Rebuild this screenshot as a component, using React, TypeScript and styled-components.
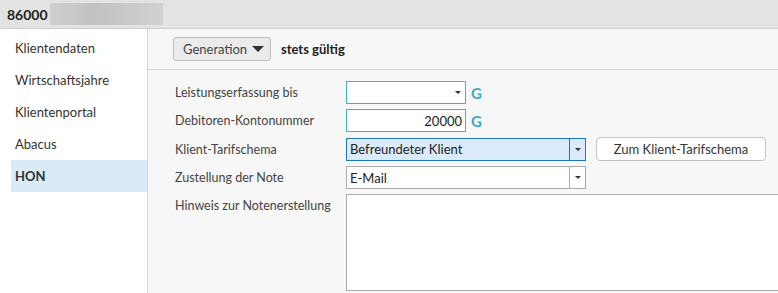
import React from "react";
import styled, { createGlobalStyle } from "styled-components";

const Global = createGlobalStyle`
  html, body {
    margin: 0;
    padding: 0;
    background: #f7f7f7;
  }
  body {
    font-family: Lato, "Noto Sans", sans-serif;
    font-size: 12.5px;
    color: #333;
  }
`;

const Page = styled.div`
  width: 778px;
  height: 293px;
  display: flex;
  flex-direction: column;
  overflow: hidden;
`;

const Header = styled.div`
  height: 28px;
  flex-shrink: 0;
  background: #e3e3e3;
  border-bottom: 1px solid #cdcdcd;
  display: flex;
  align-items: center;
  padding-left: 7px;
  gap: 2px;
`;

const ClientNo = styled.span`
  font-weight: 700;
  font-size: 14px;
  color: #222;
`;

const Redacted = styled.div`
  width: 113px;
  height: 22px;
  background: linear-gradient(90deg, #cfcfcf, #c2c2c2 40%, #c9c9c9 70%, #d2d2d2);
`;

const Body = styled.div`
  flex: 1;
  display: flex;
  min-height: 0;
`;

const Sidebar = styled.nav`
  width: 148px;
  flex-shrink: 0;
  background: #fff;
  border-right: 1px solid #d6d6d6;
  padding: 3px 0 0 11px;
  box-sizing: border-box;
`;

const NavItem = styled.div<{ $active?: boolean }>`
  height: 32px;
  display: flex;
  align-items: center;
  padding-left: 4px;
  font-size: 13px;
  color: #333;
  font-weight: ${(p) => (p.$active ? 700 : 400)};
  background: ${(p) => (p.$active ? "#d9ebf7" : "transparent")};
`;

const Main = styled.main`
  flex: 1;
  background: #f7f7f7;
  overflow: hidden;
`;

const Toolbar = styled.div`
  height: 40px;
  border-bottom: 1px solid #d3d3d3;
  display: flex;
  align-items: center;
  padding-left: 25px;
  gap: 10px;
`;

const DropButton = styled.button`
  height: 24px;
  width: 98px;
  padding: 0 6px 0 9px;
  display: flex;
  align-items: center;
  justify-content: space-between;
  background: #ebebeb;
  border: 1px solid #bdbdbd;
  border-radius: 3px;
  font: inherit;
  font-size: 13px;
  color: #444;
`;

const Caret = styled.span<{ $size?: number }>`
  width: 0;
  height: 0;
  border-left: ${(p) => p.$size ?? 6}px solid transparent;
  border-right: ${(p) => p.$size ?? 6}px solid transparent;
  border-top: ${(p) => p.$size ?? 6}px solid #333;
`;

const Validity = styled.span`
  font-weight: 700;
  font-size: 13px;
  color: #222;
`;

const Form = styled.div`
  padding: 11px 0 0 27px;
  display: flex;
  flex-direction: column;
  gap: 5px;
`;

const Row = styled.div<{ $top?: boolean }>`
  display: flex;
  align-items: ${(p) => (p.$top ? "flex-start" : "center")};
`;

const Label = styled.label<{ $top?: boolean }>`
  width: 171px;
  flex-shrink: 0;
  color: #444;
  padding-top: ${(p) => (p.$top ? "4px" : "0")};
`;

const Field = styled.div<{ $width: number; $accent?: "teal" | "blue"; $fill?: string }>`
  width: ${(p) => p.$width}px;
  height: 23px;
  box-sizing: border-box;
  display: flex;
  align-items: center;
  border: 1px solid
    ${(p) => (p.$accent === "teal" ? "#3cb5c6" : p.$accent === "blue" ? "#1b76c0" : "#ababab")};
  background: ${(p) => p.$fill ?? "#fff"};
  color: #222;
  font-size: 13px;
`;

const FieldText = styled.span<{ $right?: boolean }>`
  flex: 1;
  padding: 0 3px;
  text-align: ${(p) => (p.$right ? "right" : "left")};
  white-space: nowrap;
`;

const DropZone = styled.span<{ $divider?: string }>`
  width: 15px;
  height: 100%;
  display: flex;
  align-items: center;
  justify-content: center;
  border-left: ${(p) => (p.$divider ? `1px solid ${p.$divider}` : "none")};
`;

const GMark = styled.span`
  margin-left: 5px;
  color: #3aaac8;
  font-weight: 700;
  font-size: 15px;
`;

const LinkButton = styled.button`
  margin-left: 10px;
  width: 170px;
  height: 24px;
  background: #fff;
  border: 1px solid #c4c4c4;
  border-radius: 4px;
  font: inherit;
  font-size: 13px;
  color: #333;
`;

const NoteArea = styled.div`
  width: 460px;
  height: 97px;
  flex-shrink: 0;
  box-sizing: border-box;
  background: #fff;
  border: 1px solid #ababab;
`;

const navItems = ["Klientendaten", "Wirtschaftsjahre", "Klientenportal", "Abacus", "HON"];

export default function App() {
  return (
    <Page>
      <Global />
      <Header>
        <ClientNo>86000</ClientNo>
        <Redacted />
      </Header>
      <Body>
        <Sidebar>
          {navItems.map((n) => (
            <NavItem key={n} $active={n === "HON"}>
              {n}
            </NavItem>
          ))}
        </Sidebar>
        <Main>
          <Toolbar>
            <DropButton>
              Generation <Caret />
            </DropButton>
            <Validity>stets gültig</Validity>
          </Toolbar>
          <Form>
            <Row>
              <Label>Leistungserfassung bis</Label>
              <Field $width={120} $accent="teal">
                <FieldText />
                <DropZone>
                  <Caret $size={3} />
                </DropZone>
              </Field>
              <GMark>G</GMark>
            </Row>
            <Row>
              <Label>Debitoren-Kontonummer</Label>
              <Field $width={120} $accent="teal">
                <FieldText $right>20000</FieldText>
              </Field>
              <GMark>G</GMark>
            </Row>
            <Row>
              <Label>Klient-Tarifschema</Label>
              <Field $width={240} $accent="blue" $fill="#dcebfb">
                <FieldText>Befreundeter Klient</FieldText>
                <DropZone $divider="#1b76c0">
                  <Caret $size={3} />
                </DropZone>
              </Field>
              <LinkButton>Zum Klient-Tarifschema</LinkButton>
            </Row>
            <Row>
              <Label>Zustellung der Note</Label>
              <Field $width={240}>
                <FieldText>E-Mail</FieldText>
                <DropZone $divider="#ababab">
                  <Caret $size={3} />
                </DropZone>
              </Field>
            </Row>
            <Row $top>
              <Label $top>Hinweis zur Notenerstellung</Label>
              <NoteArea />
            </Row>
          </Form>
        </Main>
      </Body>
    </Page>
  );
}
